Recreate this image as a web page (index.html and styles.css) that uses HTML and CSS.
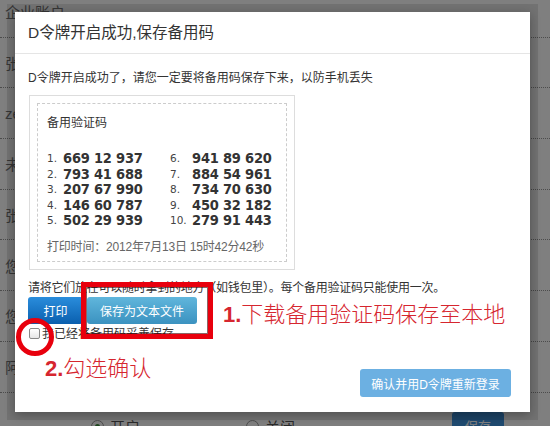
FILE: index.html
```html
<!DOCTYPE html>
<html lang="zh-CN">
<head>
    <meta charset="UTF-8">
    <title>D令牌开启成功</title>
    <link rel="stylesheet" href="styles.css">
</head>
<body>

<div class="page">
    <ul class="rows">
        <li>企业账户</li>
        <li>张小明</li>
        <li>zeng.li</li>
        <li>未绑定手机</li>
        <li>张伟</li>
        <li>您的手机号</li>
        <li>您的邮箱</li>
        <li>阿里旺旺</li>
    </ul>
    <div class="switch-row">
        <label class="radio"><span class="dot on"></span>开启</label>
        <label class="radio"><span class="dot"></span>关闭</label>
        <button class="page-save">保存</button>
    </div>
</div>

<div class="backdrop"></div>

<div class="modal">
    <div class="modal-header">
        <h3>D令牌开启成功,保存备用码</h3>
    </div>
    <div class="modal-body">
        <p class="intro">D令牌开启成功了，请您一定要将备用码保存下来，以防手机丢失</p>
        <div class="codes-box">
            <div class="codes-inner">
                <div class="codes-title">备用验证码</div>
                <div class="codes">
                    <span class="num">1.</span><b>669 12 937</b><span class="num">6.</span><b>941 89 620</b>
                    <span class="num">2.</span><b>793 41 688</b><span class="num">7.</span><b>884 54 961</b>
                    <span class="num">3.</span><b>207 67 990</b><span class="num">8.</span><b>734 70 630</b>
                    <span class="num">4.</span><b>146 60 787</b><span class="num">9.</span><b>450 32 182</b>
                    <span class="num">5.</span><b>502 29 939</b><span class="num">10.</span><b>279 91 443</b>
                </div>
                <div class="print-time">打印时间：2012年7月13日 15时42分42秒</div>
            </div>
        </div>
        <p class="hint">请将它们放在可以随时拿到的地方（如钱包里）。每个备用验证码只能使用一次。</p>
        <div class="actions">
            <button class="btn btn-print">打印</button>
            <button class="btn btn-save">保存为文本文件</button>
        </div>
        <label class="confirm"><span class="check"></span>我已经将备用码妥善保存</label>
    </div>
    <div class="modal-footer">
        <button class="btn-ok">确认并用D令牌重新登录</button>
    </div>

    <!-- 标注 -->
    <div class="mark-rect"></div>
    <div class="mark-circle"></div>
    <div class="mark-text step1"><b>1.</b>下载备用验证码保存至本地</div>
    <div class="mark-text step2"><b>2.</b>勾选确认</div>
</div>

</body>
</html>
```

FILE: styles.css
```css
* {
    margin: 0;
    padding: 0;
    box-sizing: border-box;
}
body {
    font-family: "Liberation Sans", "Noto Sans CJK SC", sans-serif;
    font-size: 12px;
    color: #333;
    background: #fff;
    width: 550px;
    height: 426px;
    overflow: hidden;
    position: relative;
}

/* 背景页面 */
.rows {
    list-style: none;
    margin-top: -13px;
}
.rows li {
    height: 50.7px;
    border-bottom: 1px dotted #999;
    display: flex;
    align-items: center;
    padding-left: 5px;
    font-size: 15px;
    color: #777;
}
.switch-row {
    display: flex;
    align-items: flex-start;
    padding-top: 23px;
    font-size: 15px;
    color: #555;
}
.radio {
    display: flex;
    align-items: center;
    gap: 6px;
}
.radio:first-child {
    margin-left: 91px;
}
.radio + .radio {
    margin-left: 106px;
}
.dot {
    width: 13px;
    height: 13px;
    border: 1px solid #999;
    border-radius: 50%;
    background: #fff;
    display: flex;
    align-items: center;
    justify-content: center;
}
.dot.on::after {
    content: "";
    width: 5px;
    height: 5px;
    border-radius: 50%;
    background: #3a8a3a;
}
.page-save {
    margin-left: auto;
    margin-right: 46px;
    margin-top: -4px;
    width: 52px;
    height: 28px;
    border: none;
    border-radius: 3px;
    background: #3e94e0;
    color: #fff;
    font-family: inherit;
    font-size: 13px;
}
.backdrop {
    position: absolute;
    inset: 0;
    background: rgba(0, 0, 0, 0.5);
}

/* 弹窗 */
.modal {
    position: absolute;
    left: 15px;
    top: 12px;
    width: 515px;
    height: 400px;
    background: #fff;
    display: flex;
    flex-direction: column;
    box-shadow: 0 0 0 8px rgba(0, 0, 0, 0.1), 0 3px 10px rgba(0, 0, 0, 0.3);
}
.modal-header {
    height: 42px;
    border-bottom: 1px solid #e5e5e5;
    padding-left: 13px;
}
.modal-header h3 {
    font-size: 15.5px;
    font-weight: normal;
    line-height: 42px;
    color: #333;
}
.modal-body {
    padding: 0 13px;
}
.intro {
    margin-top: 15px;
    line-height: 18px;
}
.codes-box {
    margin-top: 8px;
    margin-left: 1px;
    width: 266px;
    border: 1px solid #ddd;
    padding: 7px;
}
.codes-inner {
    border: 1px dashed #ccc;
    padding: 10px 0 5px 9px;
}
.codes-title {
    line-height: 18px;
}
.codes {
    margin-top: 19px;
    display: grid;
    grid-template-columns: 16px 107px 22px auto;
    grid-auto-rows: 15.5px;
    align-items: center;
    line-height: 15px;
}
.codes .num {
    font-family: "DejaVu Sans", sans-serif;
    font-size: 10.5px;
    color: #444;
}
.codes b {
    font-family: "DejaVu Sans Condensed", "DejaVu Sans", sans-serif;
    font-stretch: condensed;
    font-size: 14.5px;
    font-weight: bold;
    color: #333;
    letter-spacing: -0.2px;
}
.print-time {
    margin-top: 9px;
    line-height: 18px;
    color: #666;
    letter-spacing: -0.2px;
}
.hint {
    margin-top: 9px;
    line-height: 18px;
    letter-spacing: -0.25px;
}
.actions {
    display: flex;
    gap: 4px;
}
.btn {
    height: 27px;
    border: none;
    border-radius: 3px;
    color: #fff;
    font-family: inherit;
    font-size: 12px;
}
.btn-print {
    width: 55px;
    background: linear-gradient(#2a8ddc, #0a5fae);
}
.btn-save {
    width: 110px;
    background: linear-gradient(#60b6dc, #3b92c0);
}
.confirm {
    display: flex;
    align-items: center;
    gap: 2px;
    margin-top: 3px;
    margin-left: 1px;
    line-height: 14px;
}
.check {
    width: 11px;
    height: 11px;
    border: 1px solid #888;
    border-radius: 2px;
    background: linear-gradient(#fff, #e6e6e6);
}
.modal-footer {
    margin-top: auto;
    display: flex;
    justify-content: flex-end;
    padding: 0 19px 15px 0;
}
.btn-ok {
    width: 151px;
    height: 28px;
    border: none;
    border-radius: 3px;
    background: #6cb0e2;
    color: #fff;
    font-family: inherit;
    font-size: 12px;
}

/* 红色标注 */
.mark-rect {
    position: absolute;
    left: 66px;
    top: 270px;
    width: 132px;
    height: 57px;
    border: 5px solid #e8000d;
    box-shadow: inset 0 0 0 1px rgba(60, 0, 0, 0.6);
}
.mark-circle {
    position: absolute;
    left: 1px;
    top: 306px;
    width: 38px;
    height: 38px;
    border: 5px solid #e8000d;
    border-radius: 50%;
}
.mark-text {
    position: absolute;
    font-family: "Noto Sans CJK SC", sans-serif;
    font-weight: 300;
    font-size: 22px;
    line-height: 26px;
    color: #d6262f;
    white-space: nowrap;
}
.mark-text b {
    font-family: "Liberation Sans", sans-serif;
    font-weight: bold;
    font-size: 22px;
}
.step1 {
    left: 208px;
    top: 287px;
}
.step2 {
    left: 30px;
    top: 341px;
}
```
